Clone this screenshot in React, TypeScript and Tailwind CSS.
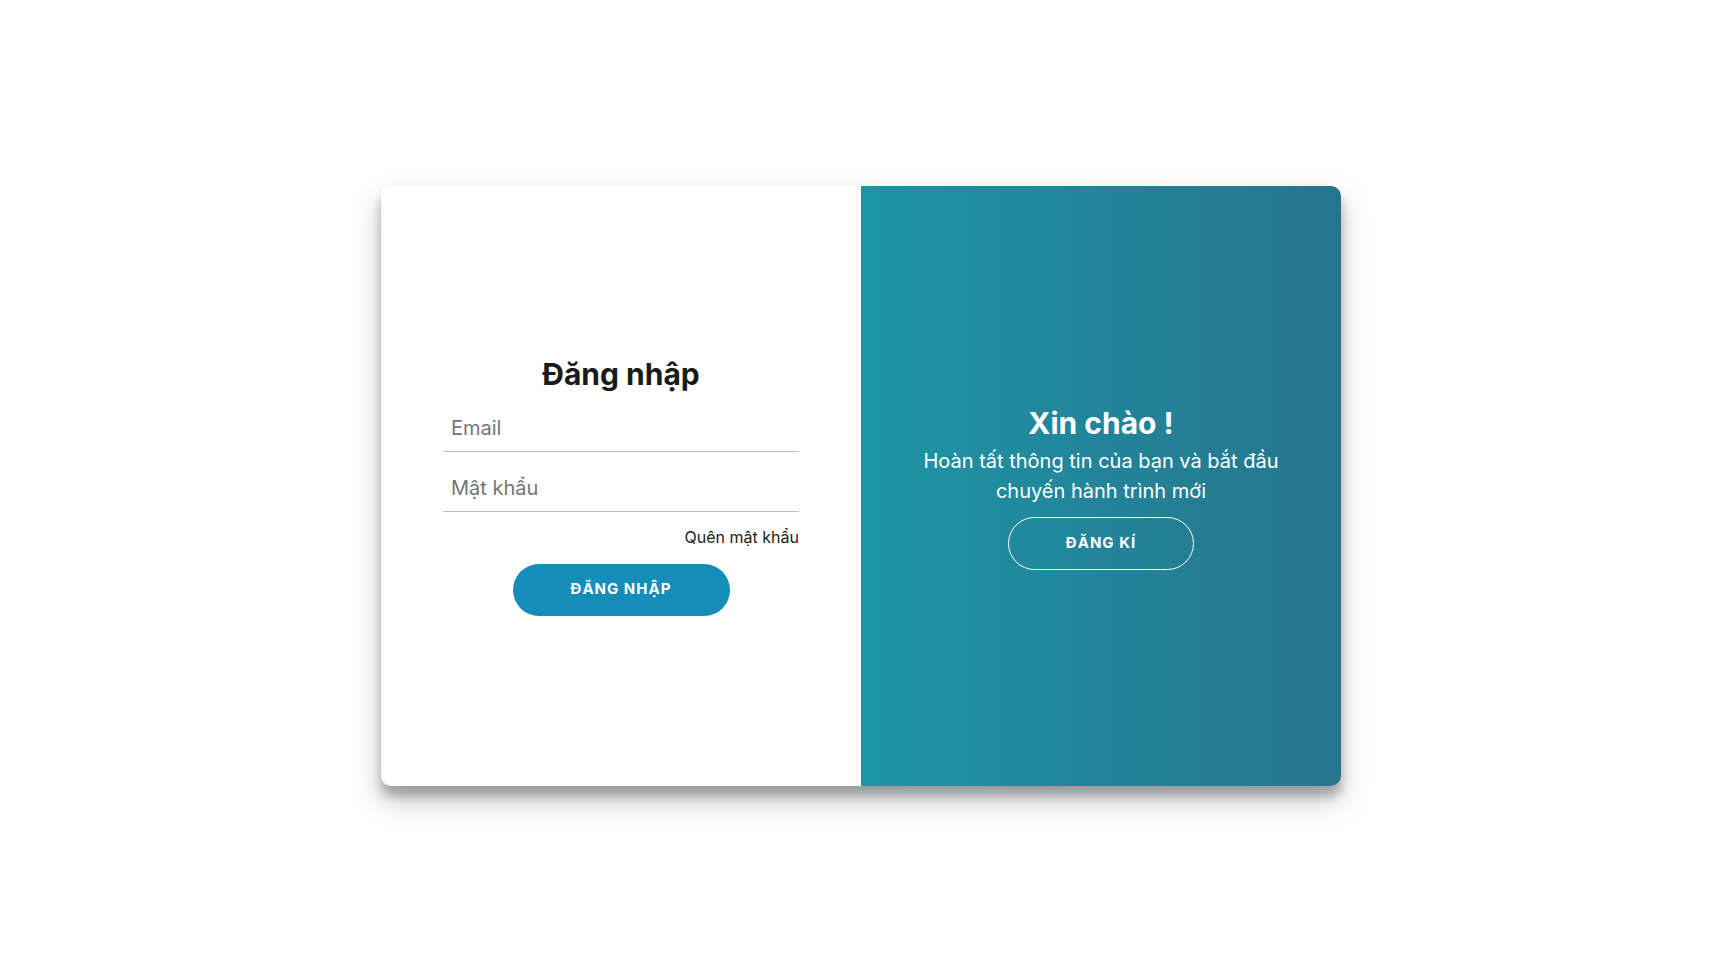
import React from "react";

export default function App() {
  return (
    <div
      className="min-h-screen w-full bg-white flex items-center justify-center pt-4"
      style={{ fontFamily: "Inter, 'Noto Sans', sans-serif" }}
    >
      <div className="flex w-[960px] h-[600px] rounded-[10px] overflow-hidden bg-white shadow-[0_14px_28px_rgba(0,0,0,0.25),0_10px_10px_rgba(0,0,0,0.22)]">
        {/* login side */}
        <form className="w-1/2 flex flex-col items-center justify-center gap-[13px] px-[62px] pt-[2px]">
          <h1 className="text-[30px] leading-8 font-bold text-[#1a1a1a] mb-[2px]">Đăng nhập</h1>
          <input
            type="email"
            placeholder="Email"
            className="w-full h-[47px] px-2 text-[20px] text-[#333] placeholder:text-[#757575] border-b border-[#bdbdbd] outline-none"
          />
          <input
            type="password"
            placeholder="Mật khẩu"
            className="w-full h-[47px] px-2 text-[20px] text-[#333] placeholder:text-[#757575] border-b border-[#bdbdbd] outline-none"
          />
          <a href="#" className="self-end text-[16px] leading-6 text-[#222]">
            Quên mật khẩu
          </a>
          <button
            type="button"
            className="mt-[2px] w-[217px] h-[52px] rounded-full bg-[#148eb8] text-white text-[15px] font-bold tracking-[1px]"
          >
            ĐĂNG NHẬP
          </button>
        </form>

        {/* welcome side */}
        <div className="w-1/2 flex flex-col items-center justify-center px-10 pt-[3px] text-center text-white bg-gradient-to-r from-[#1b95a5] to-[#26748d]">
          <h2 className="text-[30px] leading-9 font-bold">Xin chào !</h2>
          <p className="mt-[5px] text-[20px] leading-[30px]">
            Hoàn tất thông tin của bạn và bắt đầu chuyến hành trình mới
          </p>
          <button
            type="button"
            className="mt-[11px] w-[186px] h-[53px] rounded-full border border-white text-white text-[15px] font-bold tracking-[1px]"
          >
            ĐĂNG KÍ
          </button>
        </div>
      </div>
    </div>
  );
}
